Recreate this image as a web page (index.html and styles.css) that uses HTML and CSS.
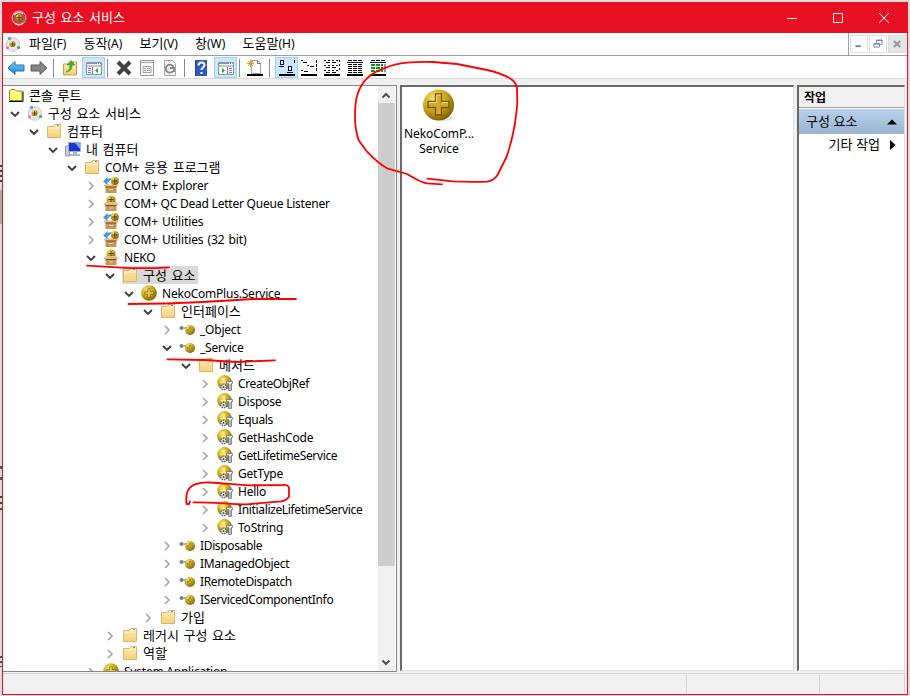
FILE: index.html
```html
<!DOCTYPE html>
<html lang="ko">
<head>
<meta charset="utf-8">
<title>구성 요소 서비스</title>
<link rel="stylesheet" href="styles.css">
</head>
<body>
<svg class="defs" width="0" height="0">
  <defs>
    <radialGradient id="gold" cx=".36" cy=".3" r=".8"><stop offset="0" stop-color="#f8e67c"/><stop offset=".45" stop-color="#cfac1c"/><stop offset="1" stop-color="#6b5200"/></radialGradient>
    <linearGradient id="paper" x1="0" y1="0" x2="0" y2="1"><stop offset="0" stop-color="#ffeab0"/><stop offset="1" stop-color="#f6d07c"/></linearGradient>
    <linearGradient id="blue" x1="0" y1="0" x2="0" y2="1"><stop offset="0" stop-color="#7fd0fa"/><stop offset="1" stop-color="#1684cf"/></linearGradient>
    <symbol id="open" viewBox="0 0 10 10"><path d="M1 3l4 4 4-4" fill="none" stroke="#404040" stroke-width="1.9"/></symbol>
    <symbol id="shut" viewBox="0 0 10 10"><path d="M3 1l4 4-4 4" fill="none" stroke="#a6a6a6" stroke-width="1.7"/></symbol>
    <symbol id="root" viewBox="0 0 16 16"><path d="M1.500 13.500V4L3 2.500h4L8.500 4H14v9.500z" fill="#ffff66" stroke="#8c8c20"/><path d="M1 14.500h14V4.500" fill="none" stroke="#000"/><path d="M2 5.500h11" stroke="#fff"/></symbol>
    <symbol id="folder" viewBox="0 0 16 16"><path d="M1.500 14.500v-11h6l1-2h6v13z" fill="url(#paper)" stroke="#dcb568"/><path d="M9 2.500h5" stroke="#fff"/><path d="M11 2.500h2" stroke="#3d8fe0"/><path d="M2 5h12" stroke="#fff0c4"/></symbol>
    <symbol id="com" viewBox="0 0 16 16"><circle cx="8" cy="8.500" r="6.800" fill="#e6e7ec" stroke="#c6c9d2"/><circle cx="7.500" cy="8" r="3" fill="url(#gold)"/><path d="M7.500 6v4M5.500 8h4" stroke="#5c3d00" stroke-width=".8"/><circle cx="4.500" cy="2.500" r="1.800" fill="#8290e8"/><circle cx="2.500" cy="12" r="1.400" fill="#e76a76"/><circle cx="13.500" cy="11.500" r="1.600" fill="#43aa55"/></symbol>
    <symbol id="comred" viewBox="0 0 16 16"><circle cx="8" cy="8" r="7" fill="#c9403f" stroke="#e3b5b5"/><path d="M3 5a6 6 0 0 1 9-1" fill="none" stroke="#e9d0d0" stroke-width="1.500"/><circle cx="8" cy="7.500" r="3.300" fill="url(#gold)"/><path d="M8 5v5M5.500 7.500h5" stroke="#5c3d00"/><circle cx="13.500" cy="11" r="1.500" fill="#55a05a"/><path d="M4 13a6 6 0 0 0 8 0" fill="none" stroke="#e9d8d8" stroke-width="1.500"/></symbol>
    <symbol id="pc" viewBox="0 0 16 16"><path d="M.5 5h4v10h-4z" fill="#c7ced8" stroke="#8d98a7"/><path d="M3.500 1.500h12v9h-12z" fill="#1c36c8" stroke="#a0b0c4"/><path d="M10 2h5v6z" fill="#7ba4ff"/><path d="M8 11h4v2h3v2H5v-2h3z" fill="#aeb6c0"/></symbol>
    <symbol id="ball" viewBox="0 0 16 16"><circle cx="8" cy="8" r="7.800" fill="url(#gold)"/><path d="M8 3.500v9M3.500 8h9" stroke="#795800" stroke-width="3"/><path d="M8 4v8M4 8h8" stroke="#f2d95c" stroke-width="1.600"/></symbol>
    <symbol id="box" viewBox="0 0 16 16"><circle cx="8" cy="5" r="4.500" fill="url(#gold)"/><path d="M8 2v5M5.500 4.500h5" stroke="#5b3d00"/><path d="M2.500 9h11v7h-11z" fill="#c69558"/><path d="M3 7h10l3 3H0z" fill="#e3bc85"/><path d="M2.500 10.500h11" stroke="#80501f"/><path d="M6 13h4" stroke="#f0d7ac"/></symbol>
    <symbol id="boxes" viewBox="0 0 16 16"><path d="M2.500 8h11v8h-11z" fill="#c69558"/><path d="M1 8.500h14" stroke="#e3bc85" stroke-width="2"/><path d="M2.500 10h11" stroke="#80501f"/><path d="M6 12.500h4" stroke="#f0d7ac"/><path d="M0 4.500L4.500 0v2C7 1 8 1 9 2c-2 1-3 2-4.500 4v2z" fill="#3e9bd5"/><circle cx="11.800" cy="4" r="4" fill="url(#gold)"/><path d="M11.800 1.500v5M9.300 4h5" stroke="#4a3200"/></symbol>
    <symbol id="iface" viewBox="0 0 16 16"><circle cx="2.500" cy="7" r="2" fill="#6685bd"/><path d="M4 7h4" stroke="#be9918" stroke-width="1.500"/><circle cx="11" cy="9" r="5" fill="url(#gold)"/><path d="M11 6v6M8 9h6" stroke="#4e3700" stroke-width="2"/><path d="M11 6v6M8 9h6" stroke="#f1da55"/></symbol>
    <symbol id="method" viewBox="0 0 16 16"><circle cx="7.500" cy="7.300" r="7.300" fill="url(#gold)"/><path d="M7 3v5M3.500 7.500H9" stroke="#fff08c" stroke-width="1.600"/><circle cx="6.500" cy="12" r="2.700" fill="#eef1f5" stroke="#66717f" stroke-width="1.500" stroke-dasharray="1.500 .8"/><circle cx="6.500" cy="12" r="1" fill="#48515e"/><path d="M9.500 6.500h6v2h-1v7h-3v-7h-2z" fill="#e4e8ee" stroke="#6c7786" stroke-width=".8"/><path d="M11.500 10h3M11.500 12h3M11.500 14h3" stroke="#6c7786" stroke-width=".8"/></symbol>
    <symbol id="console" viewBox="0 0 18 16"><path d="M1.500 2.500h15v12h-15z" fill="#f4f5f6" stroke="#8d959e"/><path d="M2 3.500h14M2 6h14" stroke="#8d959e"/><path d="M12 3.500h1M14 3.500h1" stroke="#fff"/></symbol>
  </defs>
</svg>
<div class="backdrop">
<main class="window">
  <header class="title">
    <svg class="i16"><use href="#comred"/></svg><h1>구성 요소 서비스</h1>
    <div class="caption">
      <svg viewBox="0 0 12 12"><path d="M1 6.500h10"/></svg>
      <svg viewBox="0 0 12 12"><path d="M1.500 1.500h9v9h-9z"/></svg>
      <svg viewBox="0 0 12 12"><path d="M1 1l10 10M11 1L1 11"/></svg>
    </div>
  </header>
  <nav class="menu">
    <svg class="i16"><use href="#com"/></svg>
    <span>파일<i>(F)</i></span><span>동작<i>(A)</i></span><span>보기<i>(V)</i></span><span>창<i>(W)</i></span><span>도움말<i>(H)</i></span>
    <div class="mdi">
      <svg viewBox="0 0 18 18"><path d="M5 11.500h6" stroke-width="2"/></svg>
      <svg viewBox="0 0 18 18"><path d="M4.500 8.500h6v4h-6zM4 9h7M7.500 8V4.500h6v5H11M7 5h7"/></svg>
      <svg class="off" viewBox="0 0 18 18"><path d="M5.500 5.500l7 7M12.500 5.500l-7 7" stroke-width="2.400"/></svg>
    </div>
  </nav>
  <div class="tools">
    <svg class="t" viewBox="0 0 18 18"><path d="M1 9l7-6.500V6h9v6H8v3.500z" fill="url(#blue)" stroke="#2474ab"/></svg>
    <svg class="t fwd" viewBox="0 0 18 18"><path d="M17 9l-7-6.500V6H1v6h9v3.500z" fill="#858585" stroke="#5b5b5b"/></svg>
    <b class="sep s1"></b>
    <svg class="t up" viewBox="0 0 18 18"><path d="M2.500 16V5H8l1-2h6.500v13z" fill="url(#paper)" stroke="#c99d43"/><path d="M5 13c3-1 4-4 4-7H6l4-4.500L14 6h-3c0 4-2 7-6 7z" fill="#39b52e" stroke="#278e20" stroke-width=".5"/></svg>
    <span class="on"><svg class="t" viewBox="0 0 18 16"><use href="#console"/><path d="M7.500 7v7M3 8.500h3M3 10.500h3M3 12.500h3" stroke="#718095"/><path d="M13 8v5l-3-2.500z" fill="#29a929"/></svg></span>
    <b class="sep s2"></b>
    <svg class="t" viewBox="0 0 18 18"><path d="M3 3l12 12M15 3L3 15" stroke="#444" stroke-width="4"/></svg>
    <svg class="t prop" viewBox="0 0 18 18"><path d="M2.500 1.500h13v15h-13z" fill="#f8f8f8" stroke="#939393"/><path d="M3 3.500h12M5 7.500h8v6H5zM6 9.500h2M9 9.500h3M6 11.500h2M9 11.500h3" fill="none" stroke="#a4a4a4"/></svg>
    <svg class="t refresh" viewBox="0 0 18 18"><path d="M3.500 1.500h8l3 3v12h-11z" fill="#f4f4f4" stroke="#a5a5a5"/><path d="M12 12a4 4 0 1 1 .5-4M9 9h4v4" fill="none" stroke="#858585" stroke-width="1.800"/></svg>
    <b class="sep s3"></b>
    <svg class="t help" viewBox="0 0 18 18"><path d="M3 1h12v16H3z" fill="#3158be"/><path d="M3.500 1v16" stroke="#223c94"/><path d="M6.500 6.500c0-4 6-4 6-.5 0 2.500-3 2.500-3 5M9.500 13v2" fill="none" stroke="#fff" stroke-width="2"/></svg>
    <span class="on"><svg class="t" viewBox="0 0 18 16"><use href="#console"/><path d="M10.500 7v7M12 8.500h3M12 10.500h3M12 12.500h3" stroke="#718095"/><path d="M5 8v5l3-2.500z" fill="#29a929"/></svg></span>
    <b class="sep s4"></b>
    <svg class="t new" viewBox="0 0 18 18"><path d="M5.500 1.500h6l3 3v10h-9z" fill="#fff" stroke="#a3a3a3"/><path d="M11.500 1.500v3h3" fill="none" stroke="#777"/><path d="M1 16h16" stroke="#000" stroke-width="2"/><path d="M4.500 1v7M1 4.500h7M2 2l5 5M7 2L2 7" stroke="#e3991c"/></svg>
    <b class="sep s5"></b>
    <span class="on view"><svg class="t" viewBox="0 0 18 18" shape-rendering="crispEdges"><path d="M2.500 1.500h3v4h-3zM10.500 7.500h3v4h-3z" fill="#fff" stroke="#000080"/><path d="M16.500 1v3" stroke="#000080"/><path d="M1 7.500h5M9 13.500h6" stroke="#000"/><path d="M1 16h16" stroke="#000" stroke-width="2"/></svg></span>
    <svg class="t v1" viewBox="0 0 18 18" shape-rendering="crispEdges"><path d="M1 1.500h2M7 6.500h2M1 11.500h2M16.500 1v12" fill="none" stroke="#000080" stroke-dasharray="3 1"/><path d="M3 3.500h4M10 7.500h4M4 12.500h4" stroke="#000"/><path d="M1 16h16" stroke="#000" stroke-width="2"/></svg>
    <svg class="t v2" viewBox="0 0 18 18" shape-rendering="crispEdges"><path d="M1 1.500h15M1 6.500h15M1 11.500h15M16.500 1v12" fill="none" stroke="#000080" stroke-dasharray="2 2"/><path d="M3 3.500h4M9 3.500h4M3 8.500h4M9 8.500h4M3 13.500h4M9 13.500h4" stroke="#000"/><path d="M1 16h16" stroke="#000" stroke-width="2"/></svg>
    <svg class="t v3" viewBox="0 0 18 18" shape-rendering="crispEdges"><path d="M2 1.500h14M2 5.500h14M2 7.500h14M2 9.500h14M2 11.500h14M2 13.500h14" stroke="#000" stroke-dasharray="4 1"/><path d="M1 3.500h16" stroke="#000080"/><path d="M1 16h16" stroke="#000" stroke-width="2"/></svg>
    <svg class="t v4" viewBox="0 0 18 18" shape-rendering="crispEdges"><path d="M2 1.500h14" stroke="#000" stroke-dasharray="4 1"/><path d="M1 3.500h16" stroke="#000080"/><path d="M2 6h12M2 9h12M2 12h12" stroke="#168d27" stroke-width="1.800" stroke-dasharray="4 1"/><path d="M16 5v8" stroke="#999" stroke-width="2"/><path d="M1 16h16" stroke="#000" stroke-width="2"/></svg>
  </div>
  <div class="body">
    <section class="tree">
      <div class="rows">
        <div class="row l0"><svg class="c"></svg><svg class="i16"><use href="#root"/></svg><span>콘솔 루트</span></div>
        <div class="row l1"><svg class="c"><use href="#open"/></svg><svg class="i16"><use href="#com"/></svg><span>구성 요소 서비스</span></div>
        <div class="row l2"><svg class="c"><use href="#open"/></svg><svg class="i16"><use href="#folder"/></svg><span>컴퓨터</span></div>
        <div class="row l3"><svg class="c"><use href="#open"/></svg><svg class="i16"><use href="#pc"/></svg><span>내 컴퓨터</span></div>
        <div class="row l4"><svg class="c"><use href="#open"/></svg><svg class="i16"><use href="#folder"/></svg><span><i>COM+</i> 응용 프로그램</span></div>
        <div class="row l5 en wide"><svg class="c"><use href="#shut"/></svg><svg class="i16"><use href="#boxes"/></svg><span>COM+ Explorer</span></div>
        <div class="row l5 en"><svg class="c"><use href="#shut"/></svg><svg class="i16"><use href="#box"/></svg><span>COM+ QC Dead Letter Queue Listener</span></div>
        <div class="row l5 en wide"><svg class="c"><use href="#shut"/></svg><svg class="i16"><use href="#boxes"/></svg><span>COM+ Utilities</span></div>
        <div class="row l5 en wide"><svg class="c"><use href="#shut"/></svg><svg class="i16"><use href="#boxes"/></svg><span>COM+ Utilities (32 bit)</span></div>
        <div class="row l5 en"><svg class="c"><use href="#open"/></svg><svg class="i16"><use href="#box"/></svg><span>NEKO</span></div>
        <div class="row l6 sel"><svg class="c"><use href="#open"/></svg><svg class="i16"><use href="#folder"/></svg><span>구성 요소</span></div>
        <div class="row l7 en"><svg class="c"><use href="#open"/></svg><svg class="i16"><use href="#ball"/></svg><span>NekoComPlus.Service</span></div>
        <div class="row l8"><svg class="c"><use href="#open"/></svg><svg class="i16"><use href="#folder"/></svg><span>인터페이스</span></div>
        <div class="row l9 en"><svg class="c"><use href="#shut"/></svg><svg class="i16"><use href="#iface"/></svg><span>_Object</span></div>
        <div class="row l9 en"><svg class="c"><use href="#open"/></svg><svg class="i16"><use href="#iface"/></svg><span>_Service</span></div>
        <div class="row l10"><svg class="c"><use href="#open"/></svg><svg class="i16"><use href="#folder"/></svg><span>메서드</span></div>
        <div class="row l11 en tight"><svg class="c"><use href="#shut"/></svg><svg class="i16"><use href="#method"/></svg><span>CreateObjRef</span></div>
        <div class="row l11 en"><svg class="c"><use href="#shut"/></svg><svg class="i16"><use href="#method"/></svg><span>Dispose</span></div>
        <div class="row l11 en tight"><svg class="c"><use href="#shut"/></svg><svg class="i16"><use href="#method"/></svg><span>Equals</span></div>
        <div class="row l11 en"><svg class="c"><use href="#shut"/></svg><svg class="i16"><use href="#method"/></svg><span>GetHashCode</span></div>
        <div class="row l11 en tight"><svg class="c"><use href="#shut"/></svg><svg class="i16"><use href="#method"/></svg><span>GetLifetimeService</span></div>
        <div class="row l11 en"><svg class="c"><use href="#shut"/></svg><svg class="i16"><use href="#method"/></svg><span>GetType</span></div>
        <div class="row l11 en"><svg class="c"><use href="#shut"/></svg><svg class="i16"><use href="#method"/></svg><span>Hello</span></div>
        <div class="row l11 en tight"><svg class="c"><use href="#shut"/></svg><svg class="i16"><use href="#method"/></svg><span>InitializeLifetimeService</span></div>
        <div class="row l11 en"><svg class="c"><use href="#shut"/></svg><svg class="i16"><use href="#method"/></svg><span>ToString</span></div>
        <div class="row l9 en tight"><svg class="c"><use href="#shut"/></svg><svg class="i16"><use href="#iface"/></svg><span>IDisposable</span></div>
        <div class="row l9 en tight"><svg class="c"><use href="#shut"/></svg><svg class="i16"><use href="#iface"/></svg><span>IManagedObject</span></div>
        <div class="row l9 en tight"><svg class="c"><use href="#shut"/></svg><svg class="i16"><use href="#iface"/></svg><span>IRemoteDispatch</span></div>
        <div class="row l9 en tight"><svg class="c"><use href="#shut"/></svg><svg class="i16"><use href="#iface"/></svg><span>IServicedComponentInfo</span></div>
        <div class="row l8"><svg class="c"><use href="#shut"/></svg><svg class="i16"><use href="#folder"/></svg><span>가입</span></div>
        <div class="row l6"><svg class="c"><use href="#shut"/></svg><svg class="i16"><use href="#folder"/></svg><span>레거시 구성 요소</span></div>
        <div class="row l6"><svg class="c"><use href="#shut"/></svg><svg class="i16"><use href="#folder"/></svg><span>역할</span></div>
        <div class="row l5 en"><svg class="c"><use href="#shut"/></svg><svg class="i16"><use href="#ball"/></svg><span>System Application</span></div>
      </div>
      <div class="scroll">
        <svg viewBox="0 0 16 17"><path d="M4.500 11.500L8 8l3.500 3.500" /></svg>
        <div class="thumb"></div>
        <svg viewBox="0 0 16 17"><path d="M4.500 6.500L8 10l3.500-3.500"/></svg>
      </div>
    </section>
    <section class="list">
      <figure>
        <svg viewBox="0 0 34 34"><ellipse cx="21" cy="30" rx="12" ry="3" fill="#e4e4e4"/><circle cx="16.500" cy="17" r="15.500" fill="url(#gold)"/><path d="M13.500 6h6v7.500H27v6h-7.500V27h-6v-7.500H6v-6h7.500z" fill="#cfac2a" stroke="#775500" stroke-width="1.300"/><path d="M14.500 7h4M7 14.500h7.500V8M20 14.500h6" fill="none" stroke="#f6e581"/></svg>
        <figcaption><div>NekoComP...</div><div>Service</div></figcaption>
      </figure>
    </section>
    <section class="actions">
      <h2>작업</h2>
      <div class="group"><span>구성 요소</span><svg viewBox="0 0 10 6"><path d="M0 5.500L5 .5l5 5z"/></svg></div>
      <div class="more"><span>기타 작업</span><svg viewBox="0 0 6 10"><path d="M0 0l5.500 5L0 10z"/></svg></div>
    </section>
  </div>
  <footer class="status"><div></div><div></div><div></div></footer>
</main>
</div>
<svg class="marks" viewBox="0 0 910 696">
  <path d="M442 184.300L427 183.300C419 182 413 177 407 174L387 168.300C379 164 373 158 367 151.700L358.500 140C356 132 355 125 355 117C355 109 355 103 357 96C359 89 362 83 367 78.300C372 73 377 71 384 68.300C392 65 399 63.500 407 62.700Q420 61.500 433 62L457 64L487 70C496 72 504 75 510 78.300Q516 82 517 88L517.300 104L515 123.500C513 135 510 147 506.500 157L497.500 175C495 179 491 181 487 181.700C476 182.500 464 181.500 453 181.300L427.500 178.700"/>
  <path d="M87 265.700L117 267.300Q143 269 169 267.300M128.500 304Q166 304 203 302L253 299H296M167.500 359.300L204 360L237 362L275 360.300"/>
  <path d="M190 501.500L189 504H186.500C186 499 186 495 187.500 491.500Q190 486 195 484.300Q202 482 210 482.500C224 483 237 485 250 485.300L283 485Q288 484.500 289 488V496.500Q287 500 281.500 501.300L247 504.300C229 504 211 502 193.500 502.300"/>
</svg>
</body>
</html>
```
FILE: styles.css
```css
* { box-sizing: border-box; }
body { margin: 0; width: 910px; height: 696px; overflow: hidden; font: 13px "Noto Sans CJK KR", sans-serif; color: #000; }
.defs { position: absolute; }
svg { display: block; flex: none; }
.backdrop {
  height: 696px;
  padding: 2px;
  background:
    repeating-linear-gradient(#444 0 2px, #d8d8d8 2px 5px) 0 165px / 2px 17px no-repeat,
    linear-gradient(#aaa, #aaa) 0 190px / 2px 34px no-repeat,
    repeating-linear-gradient(#555 0 3px, #d8d8d8 3px 11px) 0 466px / 2px 14px no-repeat,
    repeating-linear-gradient(#444 0 2px, #d8d8d8 2px 6px) 0 496px / 2px 18px no-repeat,
    repeating-linear-gradient(#555 0 2px, #d8d8d8 2px 5px) 0 656px / 2px 11px no-repeat,
    #dcdcdc;
}
.window { width: 906px; height: 693px; border: 1px solid #e81123; background: #f0f0f0; display: flex; flex-direction: column; }
.i16 { width: 16px; height: 16px; }
i, .en, figcaption { font-family: "Noto Sans", sans-serif; font-size: 12px; font-style: normal; }

.title { height: 30px; flex: none; background: #e81123; color: #fff; display: flex; align-items: center; padding-left: 8px; }
.title h1 { margin: 0 0 3px 5px; font-size: 13px; font-weight: 400; word-spacing: 1px; }
.caption { margin-left: auto; display: flex; gap: 34px; padding-right: 17px; }
.caption svg { width: 12px; height: 12px; fill: none; stroke: #fff; }

.menu { height: 23px; flex: none; background: #fff; border-bottom: 1px solid #a0a0a0; display: flex; align-items: center; padding-left: 2px; }
.menu .i16 { margin-right: 8px; }
.menu span { margin: 0 17.2px 3px 0; white-space: nowrap; }
.mdi { margin-left: auto; height: 22px; border-left: 1px solid #a0a0a0; display: flex; gap: 1px; padding: 2px 1px; }
.mdi svg { width: 18px; height: 18px; border: 1px solid #dedede; fill: none; stroke: #6f7f91; }
.mdi .off { background: #e5e5e5; stroke: #929dab; }

.tools { height: 23px; flex: none; background: #fff; border-bottom: 1px solid #d9d9d9; display: flex; align-items: center; padding: 1px 0 0 4px; }
.t { width: 18px; height: 18px; margin-right: 5px; }
.fwd { margin-right: 2px; }
.sep { width: 1px; height: 18px; background: #898989; }
.on { width: 23px; height: 21px; background: #cce8ff; border: 1px solid #99d1ff; display: flex; align-items: center; justify-content: center; }
.on .t { margin: 0; }
.s1 { margin: 0 7px 0 3px; }
.up { margin-right: 3px; }
.s2 { margin: 0 7px 0 2px; }
.s3 { margin: 0 7px 0 0; }
.help { margin-right: 4px; }
.s4 { margin: 0 6px 0 2px; }
.new { margin-right: 5px; }
.s5 { margin-right: 5px; }
.view { margin-right: 2px; }

.body { display: flex; height: 592px; flex: none; padding-top: 6px; }
.body > section { height: 587px; flex: none; }
.tree { width: 394px; background: #fff; border: 1px solid #828790; border-left: 0; display: flex; overflow: hidden; }
.rows { flex: 1; height: 585px; overflow: hidden; }
.row { height: 18px; display: flex; align-items: center; white-space: nowrap; word-spacing: 1px; }
.row span { margin-left: 2px; padding: 0 3px; line-height: 18px; }
.row.en { letter-spacing: -.22px; }
.row.en span { padding-top: 2px; }
.row.en.tight { letter-spacing: -.35px; }
.row.en:not(.wide):not(.tight) { word-spacing: 0; }
.row.en.wide { letter-spacing: -.1px; }
.c { width: 10px; height: 10px; margin-right: 7px; margin-top: 2px; }
.l0 { margin-left: -12px; }
.l1 { margin-left: 7px; }
.l2 { margin-left: 26px; }
.l3 { margin-left: 45px; }
.l4 { margin-left: 64px; }
.l5 { margin-left: 83px; }
.l6 { margin-left: 102px; }
.l7 { margin-left: 121px; }
.l8 { margin-left: 140px; }
.l9 { margin-left: 159px; }
.l10 { margin-left: 178px; }
.l11 { margin-left: 197px; }
.sel .i16, .sel span { background: #d9d9d9; }
.sel .i16 { height: 18px; padding: 1px 0; }
.sel span { margin-left: 0; padding-left: 5px; }
.scroll { width: 17px; margin-right: 1px; background: #f0f0f0; display: flex; flex-direction: column; }
.scroll svg { width: 16px; height: 17px; fill: none; stroke: #505050; stroke-width: 2; }
.thumb { height: 463px; background: #cdcdcd; margin-bottom: auto; }

.body > .list, .body > .actions { height: 586px; background: #fff; border: 1px solid #e3e3e3; border-top: 2px solid #696969; border-left: 2px solid #696969; }
.list { width: 394px; margin-left: 3px; }
.list figure { margin: 0 0 0 -1px; width: 76px; padding-top: 1px; }
.list figure svg { width: 34px; height: 34px; margin: 0 auto; }
figcaption { padding-top: 4px; letter-spacing: -.1px; }
figcaption div { height: 15px; line-height: 15px; text-align: center; }

.actions { width: 108px; margin-left: 3px; }
.actions h2 { margin: 0; height: 21px; background: #f0f0f0; border-bottom: 1px solid #a0a0a0; font-size: 12px; line-height: 19px; padding-left: 5px; }
.group { height: 25px; margin-top: 1px; background: linear-gradient(#b9d1ea, #99b4d1); display: flex; align-items: center; justify-content: space-between; padding: 0 7px; }
.group span, .more span { margin-bottom: 3px; }
.group svg { width: 10px; height: 6px; }
.more { height: 22px; display: flex; align-items: center; justify-content: flex-end; gap: 10px; padding-right: 8px; }
.more svg { width: 6px; height: 10px; }

.status { flex: 1; margin-top: 2px; border-top: 1px solid #d5d5d5; display: flex; padding: 1px 2px 1px 0; }
.status div { border-right: 1px solid #d5d5d5; }
.status div:nth-child(1) { width: 684px; }
.status div:nth-child(2) { width: 133px; }
.status div:nth-child(3) { flex: 1; }
.marks { position: absolute; left: 0; top: 0; width: 910px; height: 696px; fill: none; stroke: #f00; stroke-width: 1.8; stroke-linecap: round; stroke-linejoin: round; pointer-events: none; }
```
